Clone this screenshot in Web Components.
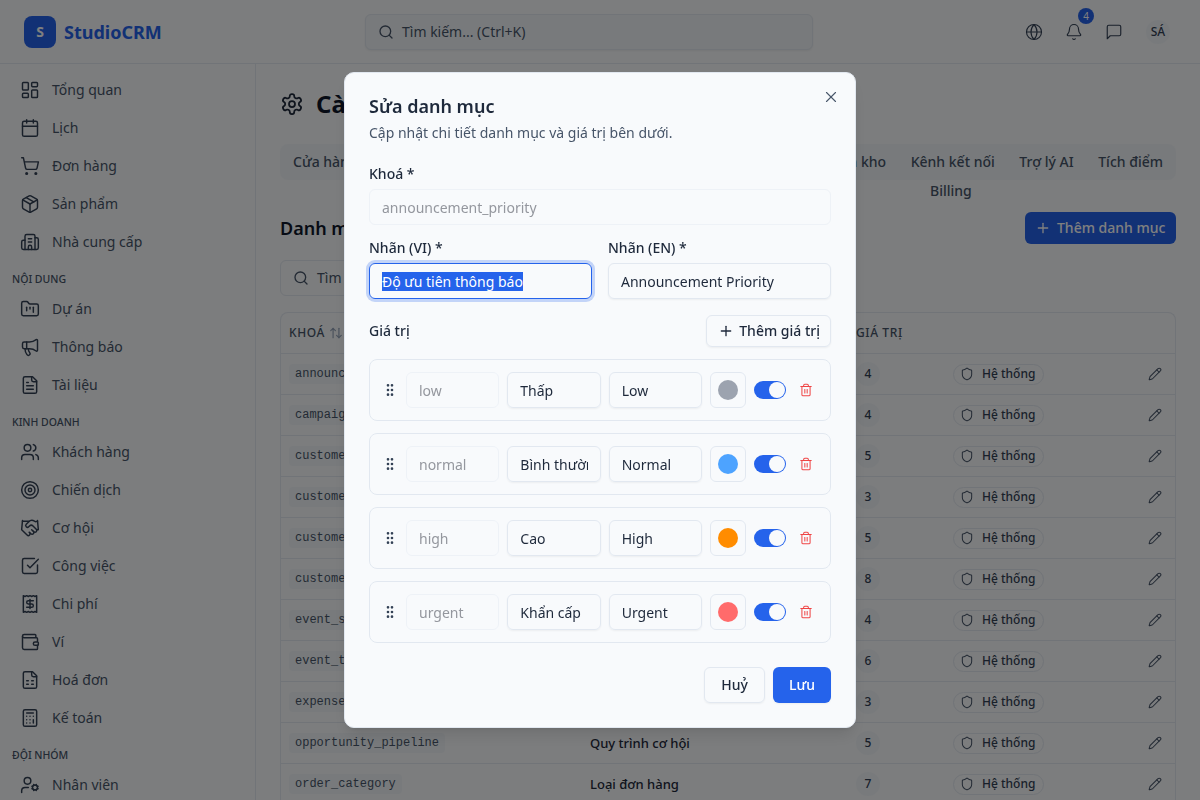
<!DOCTYPE html>
<html lang="vi">
<head>
<meta charset="utf-8">
<title>StudioCRM</title>
<style>
    html, body { margin: 0; height: 100%; overflow: hidden; }
    body { background: #f8fafc; color: #1e293b; font-family: "Noto Sans", sans-serif; font-size: 14px; line-height: 20px; }
</style>
</head>
<body>
<crm-app></crm-app>
<script>
const ICONS = {
    dashboard: '<rect width="7" height="9" x="3" y="3" rx="1"/><rect width="7" height="5" x="14" y="3" rx="1"/><rect width="7" height="9" x="14" y="12" rx="1"/><rect width="7" height="5" x="3" y="16" rx="1"/>',
    calendar: '<path d="M8 2v4"/><path d="M16 2v4"/><rect width="18" height="18" x="3" y="4" rx="2"/><path d="M3 10h18"/>',
    cart: '<circle cx="8" cy="21" r="1"/><circle cx="19" cy="21" r="1"/><path d="M2.05 2.05h2l2.66 12.42a2 2 0 0 0 2 1.58h9.78a2 2 0 0 0 1.95-1.57l1.65-7.43H5.12"/>',
    box: '<path d="M11 21.73a2 2 0 0 0 2 0l7-4A2 2 0 0 0 21 16V8a2 2 0 0 0-1-1.73l-7-4a2 2 0 0 0-2 0l-7 4A2 2 0 0 0 3 8v8a2 2 0 0 0 1 1.73z"/><path d="M12 22V12"/><path d="M3.29 7 12 12l8.71-5"/><path d="m7.5 4.27 9 5.15"/>',
    building: '<path d="M10 12h4"/><path d="M10 8h4"/><path d="M14 21v-3a2 2 0 0 0-4 0v3"/><path d="M6 10H4a2 2 0 0 0-2 2v7a2 2 0 0 0 2 2h16a2 2 0 0 0 2-2V9a2 2 0 0 0-2-2h-2"/><path d="M6 21V5a2 2 0 0 1 2-2h8a2 2 0 0 1 2 2v16"/>',
    folder: '<path d="M4 20h16a2 2 0 0 0 2-2V8a2 2 0 0 0-2-2h-7.93a2 2 0 0 1-1.66-.9l-.82-1.2A2 2 0 0 0 7.93 3H4a2 2 0 0 0-2 2v13c0 1.1.9 2 2 2Z"/><path d="M8 10v4"/><path d="M12 10v2"/><path d="M16 10v6"/>',
    megaphone: '<path d="M11 6a13 13 0 0 0 8.4-2.8A1 1 0 0 1 21 4v12a1 1 0 0 1-1.6.8A13 13 0 0 0 11 14H5a2 2 0 0 1-2-2V8a2 2 0 0 1 2-2z"/><path d="M6 14a12 12 0 0 0 2.4 7.2 2 2 0 0 0 3.2-2.4A8 8 0 0 1 10 14"/><path d="M8 6v8"/>',
    file: '<path d="M15 2H6a2 2 0 0 0-2 2v16a2 2 0 0 0 2 2h12a2 2 0 0 0 2-2V7Z"/><path d="M14 2v4a2 2 0 0 0 2 2h4"/><path d="M10 9H8"/><path d="M16 13H8"/><path d="M16 17H8"/>',
    users: '<path d="M16 21v-2a4 4 0 0 0-4-4H6a4 4 0 0 0-4 4v2"/><circle cx="9" cy="7" r="4"/><path d="M22 21v-2a4 4 0 0 0-3-3.87"/><path d="M16 3.13a4 4 0 0 1 0 7.75"/>',
    target: '<circle cx="12" cy="12" r="10"/><circle cx="12" cy="12" r="6"/><circle cx="12" cy="12" r="2"/>',
    handshake: '<path d="m11 17 2 2a1 1 0 1 0 3-3"/><path d="m14 14 2.5 2.5a1 1 0 1 0 3-3l-3.88-3.88a3 3 0 0 0-4.24 0l-.88.88a1 1 0 1 1-3-3l2.81-2.81a5.79 5.79 0 0 1 7.06-.87l.47.28a2 2 0 0 0 1.42.25L21 4"/><path d="m21 3 1 11h-2"/><path d="M3 3 2 14l6.5 6.5a1 1 0 1 0 3-3"/><path d="M3 4h8"/>',
    check: '<path d="M21 10.656V19a2 2 0 0 1-2 2H5a2 2 0 0 1-2-2V5a2 2 0 0 1 2-2h12.344"/><path d="m9 11 3 3L22 4"/>',
    receipt: '<path d="M4 2v20l2-1 2 1 2-1 2 1 2-1 2 1 2-1 2 1V2l-2 1-2-1-2 1-2-1-2 1-2-1-2 1Z"/><path d="M16 8h-6a2 2 0 1 0 0 4h4a2 2 0 1 1 0 4H8"/><path d="M12 17.5v-11"/>',
    wallet: '<path d="M19 7V4a1 1 0 0 0-1-1H5a2 2 0 0 0 0 4h15a1 1 0 0 1 1 1v4h-3a2 2 0 0 0 0 4h3a1 1 0 0 0 1-1v-2a1 1 0 0 0-1-1"/><path d="M3 5v14a2 2 0 0 0 2 2h15a1 1 0 0 0 1-1v-4"/>',
    invoice: '<path d="M15 2H6a2 2 0 0 0-2 2v16a2 2 0 0 0 2 2h12a2 2 0 0 0 2-2V7Z"/><path d="M14 2v4a2 2 0 0 0 2 2h4"/><path d="M8 13h2"/><path d="M14 13h2"/><path d="M8 17h2"/><path d="M14 17h2"/>',
    calculator: '<rect width="16" height="20" x="4" y="2" rx="2"/><path d="M8 6h8"/><path d="M16 14v4"/><path d="M16 10h.01"/><path d="M12 10h.01"/><path d="M8 10h.01"/><path d="M12 14h.01"/><path d="M8 14h.01"/><path d="M12 18h.01"/><path d="M8 18h.01"/>',
    usercog: '<path d="M10 15H6a4 4 0 0 0-4 4v2"/><path d="m14.305 16.53.923-.382"/><path d="m15.228 13.852-.923-.383"/><path d="m16.852 12.228-.383-.923"/><path d="m16.852 17.772-.383.924"/><path d="m19.148 12.228.383-.923"/><path d="m19.53 18.696-.382-.924"/><path d="m20.772 13.852.924-.383"/><path d="m20.772 16.148.924.383"/><circle cx="18" cy="15" r="3"/><circle cx="9" cy="7" r="4"/>',
    settings: '<path d="M12.22 2h-.44a2 2 0 0 0-2 2v.18a2 2 0 0 1-1 1.73l-.43.25a2 2 0 0 1-2 0l-.15-.08a2 2 0 0 0-2.73.73l-.22.38a2 2 0 0 0 .73 2.73l.15.1a2 2 0 0 1 1 1.72v.51a2 2 0 0 1-1 1.74l-.15.09a2 2 0 0 0-.73 2.73l.22.38a2 2 0 0 0 2.73.73l.15-.08a2 2 0 0 1 2 0l.43.25a2 2 0 0 1 1 1.73V20a2 2 0 0 0 2 2h.44a2 2 0 0 0 2-2v-.18a2 2 0 0 1 1-1.73l.43-.25a2 2 0 0 1 2 0l.15.08a2 2 0 0 0 2.73-.73l.22-.39a2 2 0 0 0-.73-2.73l-.15-.08a2 2 0 0 1-1-1.74v-.5a2 2 0 0 1 1-1.74l.15-.09a2 2 0 0 0 .73-2.73l-.22-.38a2 2 0 0 0-2.73-.73l-.15.08a2 2 0 0 1-2 0l-.43-.25a2 2 0 0 1-1-1.73V4a2 2 0 0 0-2-2z"/><circle cx="12" cy="12" r="3"/>',
    search: '<path d="m21 21-4.34-4.34"/><circle cx="11" cy="11" r="8"/>',
    globe: '<circle cx="12" cy="12" r="10"/><path d="M12 2a14.5 14.5 0 0 0 0 20 14.5 14.5 0 0 0 0-20"/><path d="M2 12h20"/>',
    bell: '<path d="M10.268 21a2 2 0 0 0 3.464 0"/><path d="M3.262 15.326A1 1 0 0 0 4 17h16a1 1 0 0 0 .74-1.673C19.41 13.956 18 12.499 18 8A6 6 0 0 0 6 8c0 4.499-1.411 5.956-2.738 7.326"/>',
    message: '<path d="M21 15a2 2 0 0 1-2 2H7l-4 4V5a2 2 0 0 1 2-2h14a2 2 0 0 1 2 2z"/>',
    x: '<path d="M18 6 6 18"/><path d="m6 6 12 12"/>',
    plus: '<path d="M5 12h14"/><path d="M12 5v14"/>',
    grip: '<circle cx="9" cy="12" r="1"/><circle cx="9" cy="5" r="1"/><circle cx="9" cy="19" r="1"/><circle cx="15" cy="12" r="1"/><circle cx="15" cy="5" r="1"/><circle cx="15" cy="19" r="1"/>',
    trash: '<path d="M3 6h18"/><path d="M19 6v14c0 1-1 2-2 2H7c-1 0-2-1-2-2V6"/><path d="M8 6V4c0-1 1-2 2-2h4c1 0 2 1 2 2v2"/><path d="M10 11v6"/><path d="M14 11v6"/>',
    shield: '<path d="M20 13c0 5-3.5 7.5-7.66 8.95a1 1 0 0 1-.67-.01C7.5 20.5 4 18 4 13V6a1 1 0 0 1 1-1c2 0 4.5-1.2 6.24-2.72a1.17 1.17 0 0 1 1.52 0C14.51 3.81 17 5 19 5a1 1 0 0 1 1 1z"/>',
    pencil: '<path d="M21.174 6.812a1 1 0 0 0-3.986-3.987L3.842 16.174a2 2 0 0 0-.5.83l-1.321 4.352a.5.5 0 0 0 .623.622l4.353-1.32a2 2 0 0 0 .83-.497z"/><path d="m15 5 4 4"/>',
    sort: '<path d="m21 16-4 4-4-4"/><path d="M17 20V4"/><path d="m3 8 4-4 4 4"/><path d="M7 4v16"/>'
}

class UiIcon extends HTMLElement {
    connectedCallback(){
        let size = this.getAttribute("size") || 16
        let stroke = this.getAttribute("stroke") || 2
        let root = this.shadowRoot || this.attachShadow({mode:"open"})
        root.innerHTML = `
            <style>:host{display:inline-flex;flex:none} svg{display:block}</style>
            <svg xmlns="http://www.w3.org/2000/svg" width="${size}" height="${size}" viewBox="0 0 24 24" fill="none"
                stroke="currentColor" stroke-width="${stroke}" stroke-linecap="round" stroke-linejoin="round">${ICONS[this.getAttribute("name")]}</svg>`
    }
}
customElements.define("ui-icon", UiIcon)

class CrmHeader extends HTMLElement {
    constructor(){
        super()
        this.attachShadow({mode:"open"})
        this.shadowRoot.innerHTML = `
        <style>
            :host { display:flex; align-items:center; height:64px; box-sizing:border-box; padding:0 24px; border-bottom:1px solid #e2e8f0; background:#f8fafc; }
            .brand { display:flex; align-items:center; gap:8px; width:341px; }
            .logo { width:32px; height:32px; border-radius:8px; background:#2563eb; color:#fff; display:flex; align-items:center; justify-content:center; font-size:14px; font-weight:700; }
            .name { font-size:18px; font-weight:700; color:#2563eb; }
            .search { width:448px; height:36px; box-sizing:border-box; display:flex; align-items:center; gap:8px; padding:0 12px; border:1px solid #e2e8f0; border-radius:6px; background:#f1f5f9; color:#475569; box-shadow:0 1px 2px rgba(0,0,0,.05); }
            .tools { margin-left:auto; display:flex; align-items:center; gap:4px; color:#334155; }
            .tool { width:36px; height:36px; display:flex; align-items:center; justify-content:center; position:relative; }
            .badge { position:absolute; top:-6px; right:-2px; width:16px; height:16px; border-radius:50%; background:#2563eb; color:#fff; font-size:10px; line-height:16px; text-align:center; }
            .avatar { width:24px; height:24px; margin:0 6px 0 10px; border-radius:50%; background:#f1f5f9; display:flex; align-items:center; justify-content:center; font-size:12px; font-weight:500; color:#334155; }
        </style>
        <div class="brand"><div class="logo">S</div><div class="name">StudioCRM</div></div>
        <div class="search"><ui-icon name="search"></ui-icon><span>Tìm kiếm... (Ctrl+K)</span></div>
        <div class="tools">
            <div class="tool"><ui-icon name="globe" size="18" stroke="1.5"></ui-icon></div>
            <div class="tool"><ui-icon name="bell" size="18" stroke="1.5"></ui-icon><span class="badge">4</span></div>
            <div class="tool"><ui-icon name="message" size="18" stroke="1.5"></ui-icon></div>
            <div class="avatar">SÁ</div>
        </div>`
    }
}
customElements.define("crm-header", CrmHeader)

class NavItem extends HTMLElement {
    constructor(){
        super()
        this.attachShadow({mode:"open"})
    }
    connectedCallback(){
        this.shadowRoot.innerHTML = `
        <style>
            :host { display:flex; align-items:center; gap:12px; height:38px; padding:0 12px; margin:0 8px; color:#475569; }
            ui-icon { color:#334155; }
        </style>
        <ui-icon name="${this.getAttribute("icon")}" size="20" stroke="1.75"></ui-icon><slot></slot>`
    }
}
customElements.define("nav-item", NavItem)

class NavLabel extends HTMLElement {
    constructor(){
        super()
        this.attachShadow({mode:"open"})
        this.shadowRoot.innerHTML = `
        <style>
            :host { display:block; box-sizing:border-box; height:29px; padding:10px 12px 3px; font-size:10.5px; line-height:16px; font-weight:500; text-transform:uppercase; color:#475569; }
        </style><slot></slot>`
    }
}
customElements.define("nav-label", NavLabel)

class CrmSidebar extends HTMLElement {
    constructor(){
        super()
        this.attachShadow({mode:"open"})
        this.shadowRoot.innerHTML = `
        <style>
            :host { display:block; flex:none; width:256px; box-sizing:border-box; padding-top:7px; border-right:1px solid #e2e8f0; overflow:hidden; }
        </style>
        <nav-item icon="dashboard">Tổng quan</nav-item>
        <nav-item icon="calendar">Lịch</nav-item>
        <nav-item icon="cart">Đơn hàng</nav-item>
        <nav-item icon="box">Sản phẩm</nav-item>
        <nav-item icon="building">Nhà cung cấp</nav-item>
        <nav-label>Nội dung</nav-label>
        <nav-item icon="folder">Dự án</nav-item>
        <nav-item icon="megaphone">Thông báo</nav-item>
        <nav-item icon="file">Tài liệu</nav-item>
        <nav-label>Kinh doanh</nav-label>
        <nav-item icon="users">Khách hàng</nav-item>
        <nav-item icon="target">Chiến dịch</nav-item>
        <nav-item icon="handshake">Cơ hội</nav-item>
        <nav-item icon="check">Công việc</nav-item>
        <nav-item icon="receipt">Chi phí</nav-item>
        <nav-item icon="wallet">Ví</nav-item>
        <nav-item icon="invoice">Hoá đơn</nav-item>
        <nav-item icon="calculator">Kế toán</nav-item>
        <nav-label>Đội nhóm</nav-label>
        <nav-item icon="usercog">Nhân viên</nav-item>`
    }
}
customElements.define("crm-sidebar", CrmSidebar)

class CategoryRow extends HTMLElement {
    constructor(){
        super()
        this.attachShadow({mode:"open"})
    }
    connectedCallback(){
        let label = this.getAttribute("label") || ""
        this.shadowRoot.innerHTML = `
        <style>
            :host { display:grid; grid-template-columns:309px 266px 97px 1fr 27px; align-items:center; height:41px; box-sizing:border-box; border-bottom:1px solid #e2e8f0; }
            code { justify-self:start; margin-left:8px; padding:2px 6px; border-radius:4px; background:#f1f5f9; font:12px/16px "Liberation Mono", monospace; color:#475569; }
            .label { font-size:13px; font-weight:500; color:#1e293b; }
            .count { width:24px; height:24px; border-radius:50%; background:#f1f5f9; text-align:center; font-size:12px; font-weight:500; line-height:24px; color:#334155; }
            .sys { justify-self:start; display:flex; align-items:center; gap:8px; height:21px; box-sizing:border-box; padding:0 8px 0 6px; border:1px solid #e2e8f0; border-radius:11px; font-size:12px; font-weight:500; color:#334155; }
            .sys ui-icon, .edit { color:#475569; }
            .edit { display:flex; }
        </style>
        <code>${this.getAttribute("code")}</code>
        <span class="label">${label}</span>
        <span class="count">${this.getAttribute("count")}</span>
        <span class="sys"><ui-icon name="shield" size="14" stroke="1.75"></ui-icon>Hệ thống</span>
        <span class="edit"><ui-icon name="pencil" size="14" stroke="1.75"></ui-icon></span>`
    }
}
customElements.define("category-row", CategoryRow)

class SettingsPage extends HTMLElement {
    constructor(){
        super()
        this.attachShadow({mode:"open"})
        this.shadowRoot.innerHTML = `
        <style>
            :host { display:block; flex:1; min-width:0; box-sizing:border-box; padding:24px; overflow:hidden; }
            .title { display:flex; align-items:center; gap:12px; height:32px; margin-bottom:24px; }
            h1 { margin:0; font-size:24px; line-height:32px; font-weight:700; color:#0f172a; }
            .tabs { display:flex; justify-content:flex-end; gap:24.6px; height:36px; padding:0 13px; align-items:center; border-radius:8px; background:#f1f5f9; color:#475569; font-weight:500; }
            .tabs span:first-child { margin-right:auto; }
            .more { height:22px; line-height:22px; padding-left:650px; margin-bottom:10px; color:#475569; font-weight:500; }
            .head { display:flex; align-items:center; justify-content:space-between; height:32px; margin-bottom:16px; }
            h2 { margin:0; font-size:18px; line-height:28px; font-weight:600; color:#0f172a; }
            .add { display:flex; align-items:center; gap:6px; width:151px; height:32px; box-sizing:border-box; padding:0 0 0 10px; border-radius:6px; background:#2563eb; color:#fff; font-weight:500; white-space:nowrap; }
            .filter { display:flex; align-items:center; gap:8px; height:36px; box-sizing:border-box; width:400px; padding:0 12px; margin-bottom:16px; border:1px solid #e2e8f0; border-radius:6px; color:#475569; }
            .table { border:1px solid #e2e8f0; border-radius:8px 8px 0 0; border-bottom:0; }
            .cols { display:grid; grid-template-columns:309px 266px 97px 1fr; align-items:center; height:40px; border-bottom:1px solid #e2e8f0; font-size:12px; font-weight:500; letter-spacing:.6px; text-transform:uppercase; color:#475569; }
            .cols span { display:flex; align-items:center; gap:4px; }
            .cols span:first-child { padding-left:8px; }
            .cols ui-icon { color:#94a3b8; }
        </style>
        <div class="title"><ui-icon name="settings" size="24" stroke="1.75"></ui-icon><h1>Cài đặt</h1></div>
        <div class="tabs"><span>Cửa hàng</span><span>Tồn kho</span><span>Kênh kết nối</span><span>Trợ lý AI</span><span>Tích điểm</span></div>
        <div class="more">Billing</div>
        <div class="head"><h2>Danh mục</h2><div class="add"><ui-icon name="plus"></ui-icon>Thêm danh mục</div></div>
        <div class="filter"><ui-icon name="search"></ui-icon>Tìm kiếm...</div>
        <div class="table">
            <div class="cols"><span>Khoá<ui-icon name="sort" size="14"></ui-icon></span><span></span><span>Giá trị</span><span></span></div>
            <category-row code="announc" count="4"></category-row>
            <category-row code="campaig" count="4"></category-row>
            <category-row code="custome" count="5"></category-row>
            <category-row code="custome" count="3"></category-row>
            <category-row code="custome" count="5"></category-row>
            <category-row code="custome" count="8"></category-row>
            <category-row code="event_s" count="4"></category-row>
            <category-row code="event_t" count="6"></category-row>
            <category-row code="expense" count="3"></category-row>
            <category-row code="opportunity_pipeline" label="Quy trình cơ hội" count="5"></category-row>
            <category-row code="order_category" label="Loại đơn hàng" count="7"></category-row>
        </div>`
    }
}
customElements.define("settings-page", SettingsPage)

class TextField extends HTMLElement {
    constructor(){
        super()
        this.attachShadow({mode:"open"})
        this.shadowRoot.innerHTML = `
        <style>
            :host { display:block; min-width:0; box-sizing:border-box; height:36px; padding:0 12px; border:1px solid #e2e8f0; border-radius:6px; line-height:36px; white-space:nowrap; overflow:hidden; box-shadow:0 1px 2px rgba(0,0,0,.05); color:#1e293b; }
            :host([disabled]) { color:#94979e; box-shadow:none; border-color:#eef2f7; }
            :host([focused]) { overflow:visible; border-color:#2563eb; box-shadow:0 0 0 3px rgba(37,99,235,.25); }
            .clip { display:block; height:34px; overflow:hidden; }
        </style><span class="clip"><slot></slot></span>`
    }
}
customElements.define("text-field", TextField)

class ValueRow extends HTMLElement {
    constructor(){
        super()
        this.attachShadow({mode:"open"})
    }
    connectedCallback(){
        this.shadowRoot.innerHTML = `
        <style>
            :host { display:flex; align-items:center; gap:8px; height:62px; box-sizing:border-box; padding:12px; border:1px solid #e2e8f0; border-radius:8px; }
            text-field { flex:1 1 0; }
            .grip { color:#334155; }
            .color { flex:none; width:36px; height:36px; box-sizing:border-box; display:flex; align-items:center; justify-content:center; border:1px solid #e2e8f0; border-radius:6px; }
            .dot { width:20px; height:20px; border-radius:50%; background:${this.getAttribute("color")}; }
            .switch { flex:none; width:32px; height:18px; box-sizing:border-box; padding:1px; display:flex; justify-content:flex-end; border-radius:9px; background:#2563eb; }
            .thumb { width:16px; height:16px; border-radius:50%; background:#f8fafc; }
            .del { flex:none; width:24px; display:flex; justify-content:center; color:#ef4444; }
        </style>
        <ui-icon class="grip" name="grip"></ui-icon>
        <text-field disabled>${this.getAttribute("key")}</text-field>
        <text-field>${this.getAttribute("vi")}</text-field>
        <text-field>${this.getAttribute("en")}</text-field>
        <div class="color"><div class="dot"></div></div>
        <div class="switch"><div class="thumb"></div></div>
        <div class="del"><ui-icon name="trash" size="14" stroke="1.75"></ui-icon></div>`
    }
}
customElements.define("value-row", ValueRow)

class EditModal extends HTMLElement {
    constructor(){
        super()
        this.attachShadow({mode:"open"})
        this.shadowRoot.innerHTML = `
        <style>
            :host { position:fixed; inset:0; display:flex; align-items:center; justify-content:center; background:rgba(0,0,0,.5); }
            .dialog { position:relative; width:512px; box-sizing:border-box; padding:24px; border:1px solid #e2e8f0; border-radius:10px; background:#f8fafc; box-shadow:0 10px 15px -3px rgba(0,0,0,.1), 0 4px 6px -4px rgba(0,0,0,.1); }
            .close { position:absolute; top:15px; right:15px; color:#475569; display:flex; }
            h2 { margin:0 0 8px; font-size:18px; line-height:18px; font-weight:600; color:#1e293b; }
            p { margin:0 0 24px; color:#475569; }
            label { display:block; margin-bottom:8px; line-height:14px; font-weight:500; color:#1e293b; }
            .row { display:grid; grid-template-columns:1fr 1fr; gap:16px; margin:16px 0; }
            .vals { display:flex; align-items:center; justify-content:space-between; height:32px; margin-bottom:12px; font-weight:500; }
            .btn { display:flex; align-items:center; justify-content:center; box-sizing:border-box; border:1px solid #e2e8f0; border-radius:6px; font-weight:500; box-shadow:0 1px 2px rgba(0,0,0,.05); color:#1e293b; }
            .addval { gap:5px; height:32px; padding:0 10px 0 11px; }
            .list { display:flex; flex-direction:column; gap:12px; margin-bottom:24px; }
            .foot { display:flex; justify-content:flex-end; gap:8px; }
            .foot .btn { height:36px; padding:0 16px; }
            .foot .primary { background:#2563eb; border:0; color:#fff; }
            mark { background:#2563eb; color:#fff; }
        </style>
        <div class="dialog">
            <div class="close"><ui-icon name="x" size="18" stroke="1.5"></ui-icon></div>
            <h2>Sửa danh mục</h2>
            <p>Cập nhật chi tiết danh mục và giá trị bên dưới.</p>
            <label>Khoá *</label>
            <text-field disabled>announcement_priority</text-field>
            <div class="row">
                <div><label>Nhãn (VI) *</label><text-field focused><mark>Độ ưu tiên thông báo</mark></text-field></div>
                <div><label>Nhãn (EN) *</label><text-field>Announcement Priority</text-field></div>
            </div>
            <div class="vals"><span>Giá trị</span><div class="btn addval"><ui-icon name="plus"></ui-icon>Thêm giá trị</div></div>
            <div class="list">
                <value-row key="low" vi="Thấp" en="Low" color="#9ca3af"></value-row>
                <value-row key="normal" vi="Bình thường" en="Normal" color="#4da3ff"></value-row>
                <value-row key="high" vi="Cao" en="High" color="#ff8c00"></value-row>
                <value-row key="urgent" vi="Khẩn cấp" en="Urgent" color="#ff6b6b"></value-row>
            </div>
            <div class="foot"><div class="btn">Huỷ</div><div class="btn primary">Lưu</div></div>
        </div>`
    }
}
customElements.define("edit-modal", EditModal)

class CrmApp extends HTMLElement {
    constructor(){
        super()
        this.attachShadow({mode:"open"})
        this.shadowRoot.innerHTML = `
        <style>
            :host { display:flex; flex-direction:column; height:800px; overflow:hidden; }
            .body { display:flex; flex:1; min-height:0; }
        </style>
        <crm-header></crm-header>
        <div class="body"><crm-sidebar></crm-sidebar><settings-page></settings-page></div>
        <edit-modal></edit-modal>`
    }
}
customElements.define("crm-app", CrmApp)
</script>
</body>
</html>
